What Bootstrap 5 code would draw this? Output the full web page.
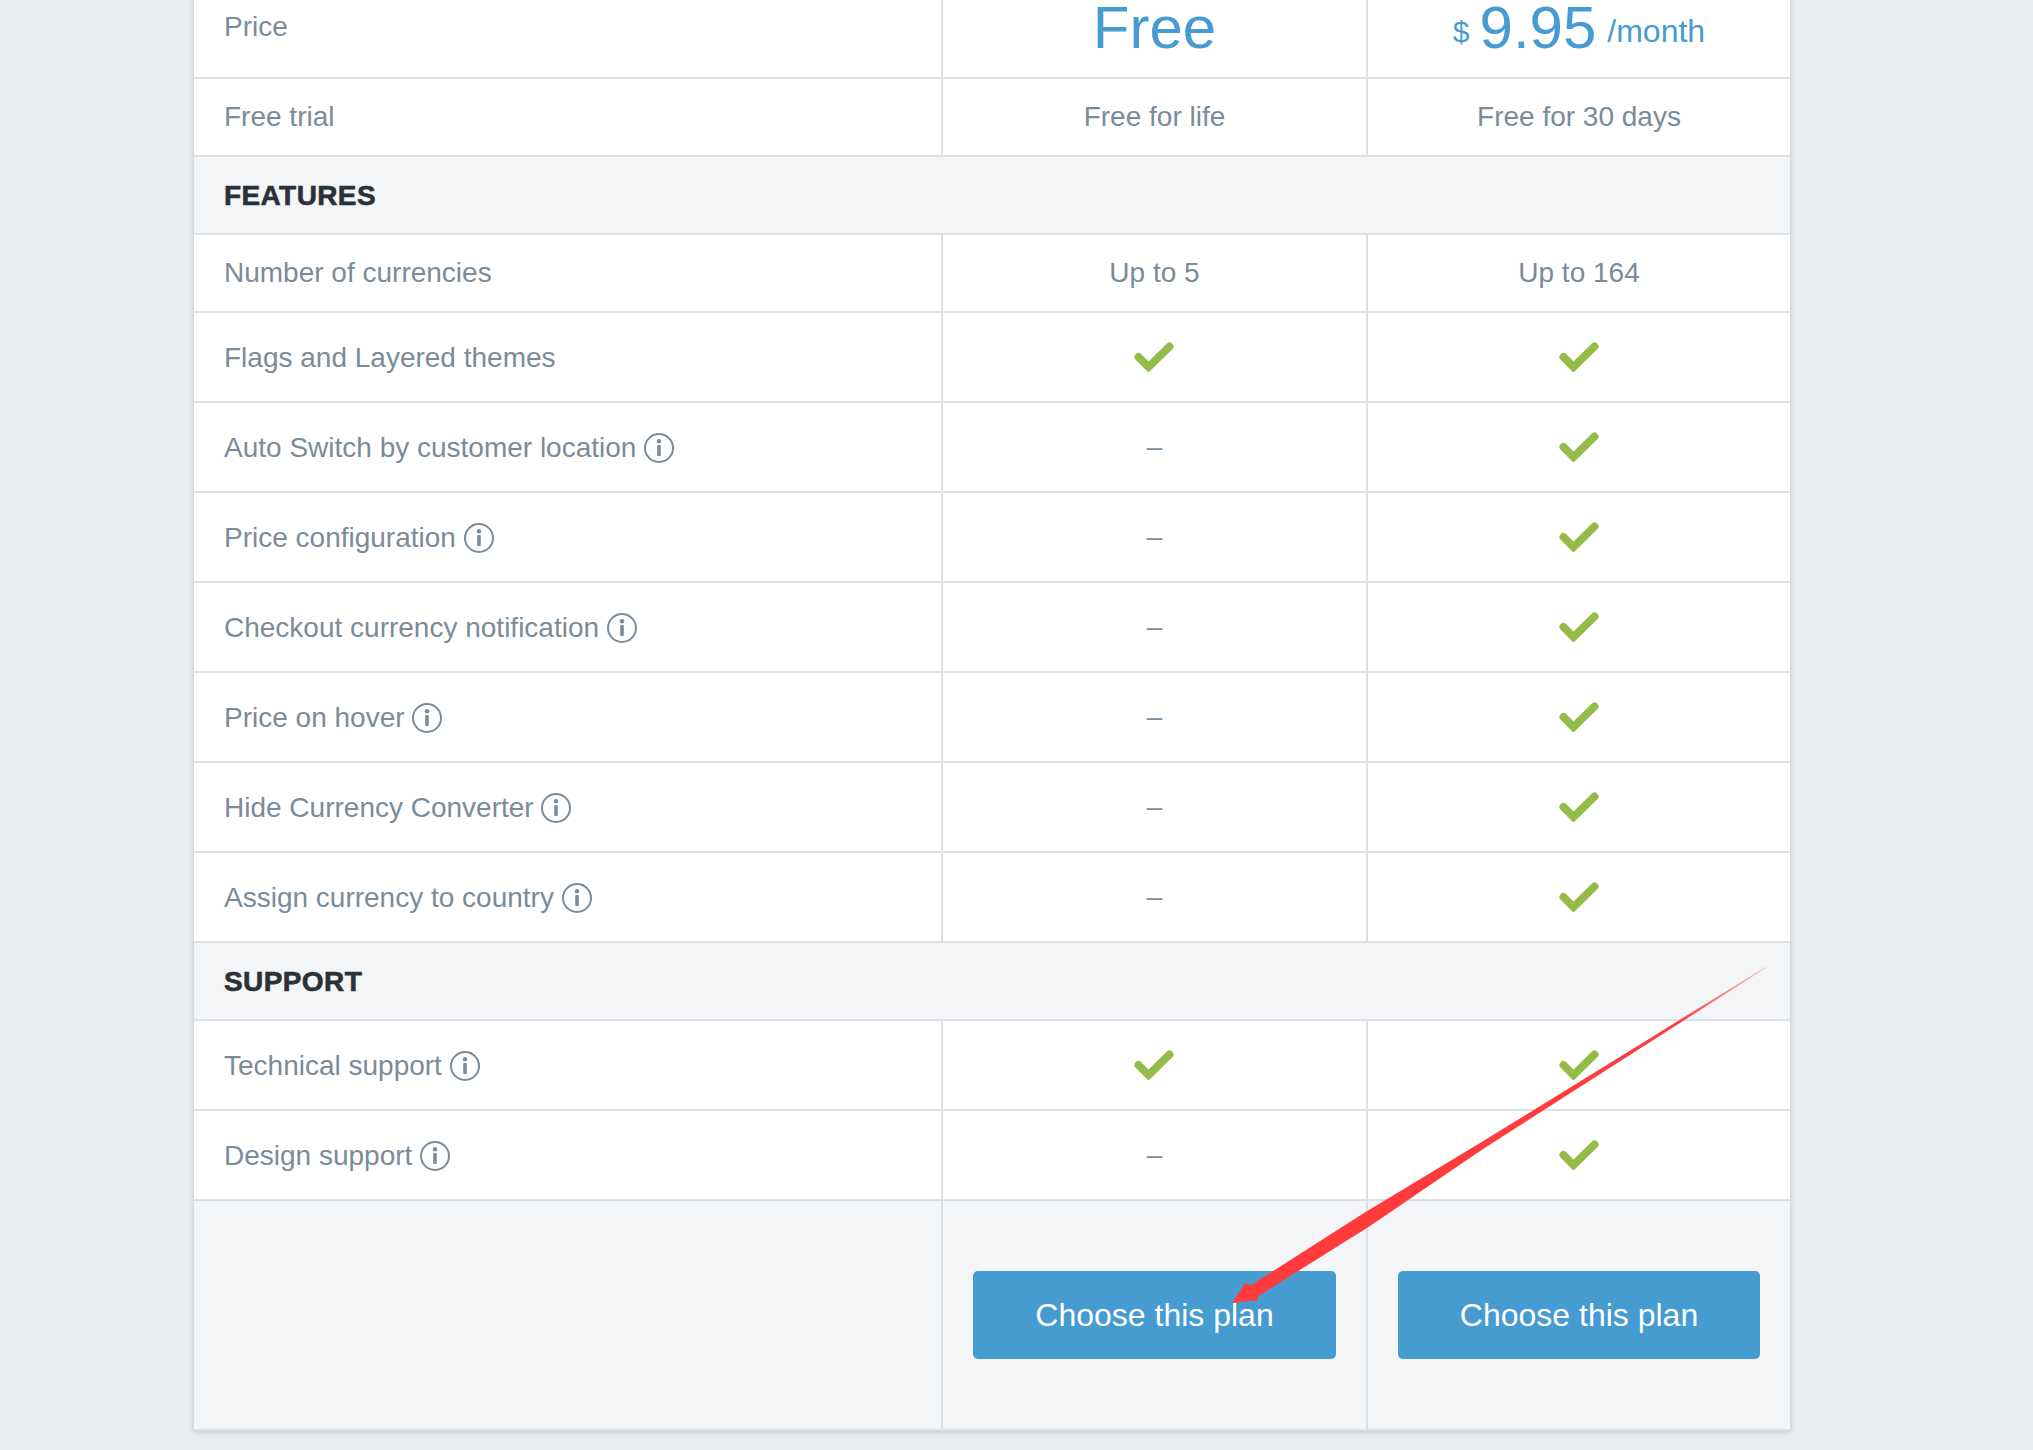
<!DOCTYPE html>
<html lang="en">
<head>
<meta charset="utf-8">
<title>Pricing</title>
<link href="https://cdn.jsdelivr.net/npm/bootstrap@5.3.0/dist/css/bootstrap.min.css" rel="stylesheet">
<style>
html, body { height: 100%; overflow: hidden; }
body { background: #e9edf0; font-family: "Liberation Sans", Arial, sans-serif; color: #7a8b9a; position: relative; }
.sheet-wrap { width: 1596px; margin: -26px 0 0 194px; box-shadow: 0 1px 5px rgba(60,70,80,.28); }
.plan-grid.table { table-layout: fixed; width: 1596px; margin: 0; font-size: 28px; border-collapse: separate; border-spacing: 0; }
.plan-grid.table > tbody > tr > td { padding: 1px 30px 0; height: 90px; vertical-align: middle; color: #7a8b9a; background: #fff; box-shadow: none; border-bottom: 2px solid #dcdfe3; border-right: 2px solid #dcdfe3; line-height: 1.2; }
.plan-grid.table > tbody > tr > td:last-child { border-right: 0; }
.plan-grid.table > tbody > tr > td.dash-cell { padding-top: 0; }
.plan-grid.table > tbody > tr.row-short > td { height: 78px; padding-top: 0; }
.plan-grid.table > tbody > tr.row-price > td { height: 105px; padding-top: 2px; }
.plan-grid.table > tbody > tr.row-price > td.text-center { padding-top: 8px; }
.plan-grid.table > tbody > tr.row-head > td { height: 78px; background: #f4f5f7; color: #2b3136; font-weight: 700; text-transform: uppercase; border-right: 0; letter-spacing: .4px; -webkit-text-stroke: .6px #2b3136; }
.plan-grid.table > tbody > tr.row-foot > td { height: 230px; background: #f4f5f7; padding-top: 0; padding-bottom: 1px; }
.plan-col-label { width: 749px; }
.plan-col-free { width: 425px; }
.plan-price { display: inline-block; color: #469bd1; font-size: 60px; line-height: .8; white-space: nowrap; }
.plan-unit { font-size: 32px; vertical-align: 6px; }
.plan-cur { font-size: 30px; vertical-align: 6px; margin-right: 10px; }
.plan-per { margin-left: 11px; }
.tip-mark { display: inline-block; width: 30px; height: 30px; vertical-align: -6px; margin-left: 0; }
.tick-mark { display: block; width: 40px; height: 30px; margin: 0 auto; transform: translate(-1px,-1px); }
.plan-grid td:last-child .tick-mark { transform: translateY(-1px); }
.plan-btn.btn { display: block; width: 100%; height: 88px; background: #469bd1; border: 0; border-radius: 5px; color: #fff; font-size: 32px; line-height: 88px; padding: 0; }
.arrow-layer { position: absolute; left: 0; top: 0; width: 2033px; height: 1450px; pointer-events: none; }
</style>
</head>
<body>
<svg width="0" height="0" class="d-block position-absolute" aria-hidden="true">
  <defs>
    <symbol id="tick" viewBox="0 0 40 30"><polyline points="4.5,15 14.5,25 35.5,4.5" fill="none" stroke="#93bc48" stroke-width="8" stroke-linejoin="miter" stroke-linecap="round"/></symbol>
    <symbol id="tip" viewBox="0 0 30 30"><circle cx="15" cy="15" r="14" fill="none" stroke="#7a8b9a" stroke-width="2"/><rect x="13.2" y="12" width="3.6" height="11" rx="1" fill="#7a8b9a"/><circle cx="15" cy="8.3" r="2.2" fill="#7a8b9a"/></symbol>
  </defs>
</svg>
<main class="sheet-wrap">
  <table class="table plan-grid">
    <colgroup><col class="plan-col-label"><col class="plan-col-free"><col></colgroup>
    <tbody>
      <tr class="row-price"><td>Price</td><td class="text-center"><span class="plan-price">Free</span></td><td class="text-center"><span class="plan-price"><span class="plan-cur">$</span>9.95<span class="plan-unit plan-per">/month</span></span></td></tr>
      <tr class="row-short"><td>Free trial</td><td class="text-center">Free for life</td><td class="text-center">Free for 30 days</td></tr>
      <tr class="row-head"><td colspan="3">Features</td></tr>
      <tr class="row-short"><td>Number of currencies</td><td class="text-center">Up to 5</td><td class="text-center">Up to 164</td></tr>
      <tr><td>Flags and Layered themes</td><td><svg class="tick-mark"><use href="#tick"/></svg></td><td><svg class="tick-mark"><use href="#tick"/></svg></td></tr>
      <tr><td>Auto Switch by customer location <svg class="tip-mark"><use href="#tip"/></svg></td><td class="text-center dash-cell">–</td><td><svg class="tick-mark"><use href="#tick"/></svg></td></tr>
      <tr><td>Price configuration <svg class="tip-mark"><use href="#tip"/></svg></td><td class="text-center dash-cell">–</td><td><svg class="tick-mark"><use href="#tick"/></svg></td></tr>
      <tr><td>Checkout currency notification <svg class="tip-mark"><use href="#tip"/></svg></td><td class="text-center dash-cell">–</td><td><svg class="tick-mark"><use href="#tick"/></svg></td></tr>
      <tr><td>Price on hover <svg class="tip-mark"><use href="#tip"/></svg></td><td class="text-center dash-cell">–</td><td><svg class="tick-mark"><use href="#tick"/></svg></td></tr>
      <tr><td>Hide Currency Converter <svg class="tip-mark"><use href="#tip"/></svg></td><td class="text-center dash-cell">–</td><td><svg class="tick-mark"><use href="#tick"/></svg></td></tr>
      <tr><td>Assign currency to country <svg class="tip-mark"><use href="#tip"/></svg></td><td class="text-center dash-cell">–</td><td><svg class="tick-mark"><use href="#tick"/></svg></td></tr>
      <tr class="row-head"><td colspan="3">Support</td></tr>
      <tr><td>Technical support <svg class="tip-mark"><use href="#tip"/></svg></td><td><svg class="tick-mark"><use href="#tick"/></svg></td><td><svg class="tick-mark"><use href="#tick"/></svg></td></tr>
      <tr><td>Design support <svg class="tip-mark"><use href="#tip"/></svg></td><td class="text-center dash-cell">–</td><td><svg class="tick-mark"><use href="#tick"/></svg></td></tr>
      <tr class="row-foot"><td></td><td><a class="btn plan-btn" href="#">Choose this plan</a></td><td><a class="btn plan-btn" href="#">Choose this plan</a></td></tr>
    </tbody>
  </table>
</main>
<svg class="arrow-layer" viewBox="0 0 2033 1450" aria-hidden="true">
  <defs><linearGradient id="fade" gradientUnits="userSpaceOnUse" x1="1766" y1="967" x2="1680" y2="1022"><stop offset="0" stop-color="#ff3b3b" stop-opacity=".2"/><stop offset="1" stop-color="#ff3b3b"/></linearGradient></defs>
  <polygon points="1766,966.5 1766,968 1640,1048.5 1480,1151 1370,1226 1257.5,1296.5 1258,1300 1232,1303 1245,1283 1250.5,1285.5 1364,1213 1480,1143 1640,1044.5" fill="url(#fade)"/>
</svg>
<script src="https://cdn.jsdelivr.net/npm/bootstrap@5.3.0/dist/js/bootstrap.bundle.min.js"></script>
</body>
</html>
